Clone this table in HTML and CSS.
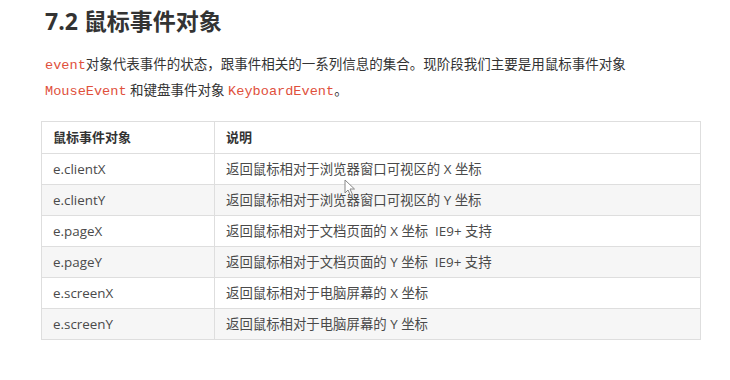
FILE: index.html
```html
<!DOCTYPE html>
<html lang="zh-CN">
<head>
<meta charset="utf-8">
<link rel="stylesheet" href="styles.css">
</head>
<body>
<div class="page">
  <h2 class="title">7.2 鼠标事件对象</h2>
  <p class="intro"><code>event</code>对象代表事件的状态，跟事件相关的一系列信息的集合。现阶段我们主要是用鼠标事件对象<br><code>MouseEvent</code> 和键盘事件对象 <code>KeyboardEvent</code>。</p>
  <table class="tbl">
    <thead>
      <tr><th class="c1">鼠标事件对象</th><th>说明</th></tr>
    </thead>
    <tbody>
      <tr><td class="c1">e.clientX</td><td>返回鼠标相对于浏览器窗口可视区的 X 坐标</td></tr>
      <tr><td class="c1">e.clientY</td><td>返回鼠标相对于浏览器窗口可视区的 Y 坐标</td></tr>
      <tr><td class="c1">e.pageX</td><td>返回鼠标相对于文档页面的 X 坐标&nbsp; IE9+ 支持</td></tr>
      <tr><td class="c1">e.pageY</td><td>返回鼠标相对于文档页面的 Y 坐标&nbsp; IE9+ 支持</td></tr>
      <tr><td class="c1">e.screenX</td><td>返回鼠标相对于电脑屏幕的 X 坐标</td></tr>
      <tr><td class="c1">e.screenY</td><td>返回鼠标相对于电脑屏幕的 Y 坐标</td></tr>
    </tbody>
  </table>
  <svg class="cursor" width="12" height="18" viewBox="0 0 12 18"><path d="M1 1 L1 14 L4 11 L6.5 16.5 L8.5 15.5 L6 10 L10.5 10 Z" fill="#fff" stroke="#888" stroke-width="1" stroke-linejoin="round"/></svg>
</div>
</body>
</html>
```

FILE: styles.css
```css
html, body {
  margin: 0;
  padding: 0;
  background: #fff;
}
.page {
  position: relative;
  width: 730px;
  height: 380px;
  overflow: hidden;
  font-family: "Open Sans", "Noto Sans CJK SC", sans-serif;
  color: #333;
}
.title {
  margin: 0;
  padding: 5px 0 0 45px;
  font-size: 23px;
  line-height: 32px;
  font-weight: 700;
  color: #333;
}
.intro {
  margin: 15px 0 0 45px;
  font-size: 13.5px;
  line-height: 24px;
  color: #333;
}
.intro code {
  font-family: "Liberation Mono", "DejaVu Sans Mono", monospace;
  font-size: 13.6px;
  color: #e0503c;
}
.tbl {
  margin: 17px 0 0 41px;
  width: 660px;
  border-collapse: collapse;
  font-size: 13.4px;
  color: #4a4a4a;
}
.tbl th, .tbl td {
  border: 1px solid #dedede;
  padding: 5px 11px;
  line-height: 20px;
  text-align: left;
}
.tbl th {
  font-weight: 700;
  font-size: 13px;
  color: #333;
  padding-top: 5px;
  padding-bottom: 6px;
  background: #fff;
}
.tbl .c1 {
  width: 150px;
}
.tbl tbody tr:nth-child(even) td {
  background: #f6f6f6;
}
.cursor {
  position: absolute;
  left: 344px;
  top: 179px;
}
```
